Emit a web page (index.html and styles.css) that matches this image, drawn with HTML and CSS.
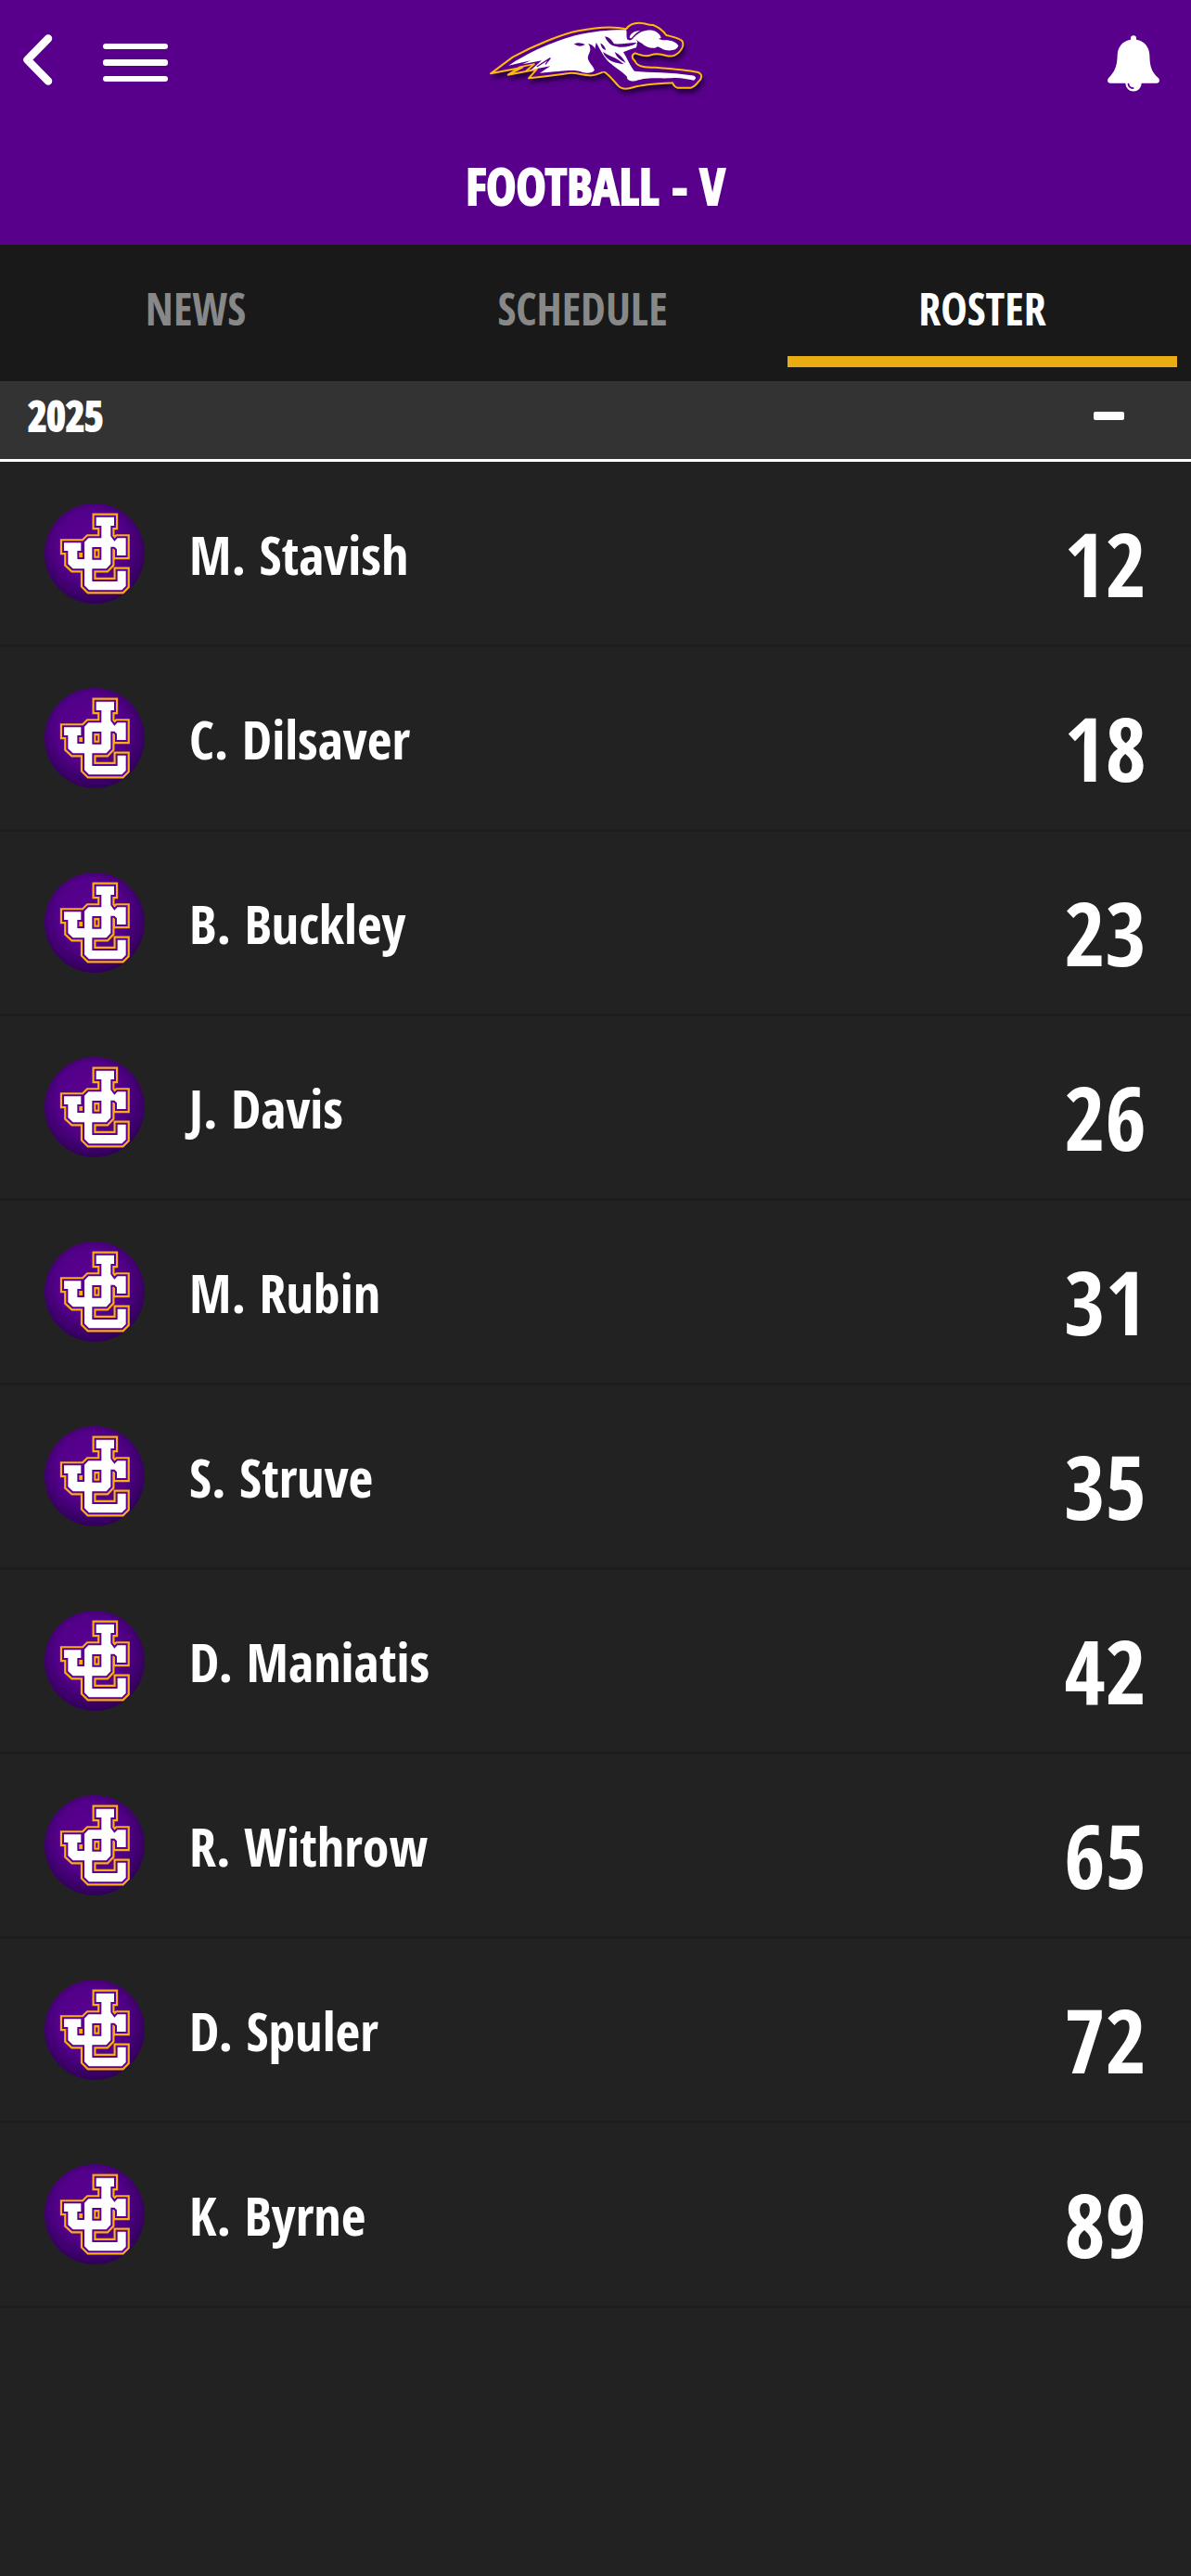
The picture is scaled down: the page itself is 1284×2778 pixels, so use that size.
FILE: index.html
```
<!DOCTYPE html>
<html lang="en">
<head>
<meta charset="utf-8">
<meta name="viewport" content="width=device-width, initial-scale=1">
<title>Football - V | Roster</title>
<link rel="stylesheet" href="styles.css">
</head>
<body>
<svg class="defs" aria-hidden="true">
  <defs>
    <radialGradient id="disc" cx="0.47" cy="0.42" r="0.58">
      <stop offset="0" stop-color="#5c0093"/>
      <stop offset="0.6" stop-color="#53008a"/>
      <stop offset="1" stop-color="#300058"/>
    </radialGradient>
    <symbol id="crest" viewBox="54 66 324 324">
      <circle cx="216" cy="228" r="162" fill="url(#disc)"/>
      <g fill-rule="evenodd">
        <path fill="#f9ae13" stroke="#f9ae13" stroke-width="25" d="M221 110H279V138H268V172L280 188L290 178H317V234H288V214L280 206H268V262L254 277H208V318H290V284H317V333L304 346H198L183 331V277H146L130 262V219H117V193H172V219H160V246H183V191L196 178H238V138H221Z"/>
        <path fill="#fff" stroke="#5c0093" stroke-width="12" paint-order="stroke" d="M221 110H279V138H268V172L280 188L290 178H317V234H288V214L280 206H268V262L254 277H208V318H290V284H317V333L304 346H198L183 331V277H146L130 262V219H117V193H172V219H160V246H183V191L196 178H238V138H221ZM208 207H238V248H208Z"/>
        <path fill="#5c0093" d="M220 220H226V236H220Z"/>
      </g>
    </symbol>
  </defs>
</svg>

<header class="masthead">
  <div class="topbar">
    <div class="topbar-left">
      <button class="icon-button" type="button" aria-label="Back">
        <svg width="34" height="62" viewBox="24 34 34 62"><path d="M52 38.500L29.500 61.500L52 84.500" fill="none" stroke="#fff" stroke-width="8.500" stroke-linecap="round" stroke-linejoin="round"/></svg>
      </button>
      <button class="icon-button" type="button" aria-label="Menu">
        <svg width="72" height="42" viewBox="0 0 72 42" fill="#fff"><rect x="1" y="0" width="70" height="6" rx="3"/><rect x="1" y="17" width="70" height="7" rx="3"/><rect x="1" y="35" width="70" height="6" rx="3"/></svg>
      </button>
    </div>
    <a class="brand" href="#" aria-label="Home">
      <svg width="260" height="100" viewBox="0 24 780 300">
        <path class="brand-outline" d="M57 208L128 155C200 115 290 80 340 70C400 58 460 56 495 64C505 50 525 43 545 45C560 46 566 52 582 51C602 58 615 70 625 84C645 89 665 92 676 102C683 115 676 130 665 140C655 150 640 154 625 150C610 145 590 142 575 148C560 155 540 148 524 142C512 148 512 156 524 168C530 187 560 188 590 188C640 192 690 196 725 203C742 208 742 222 730 233C725 240 717 250 705 254L662 254C650 252 648 243 645 238C600 240 550 242 520 252C500 259 480 259 470 248C455 232 440 212 424 202C410 206 395 216 375 214C350 212 330 204 310 207C270 212 220 220 180 223L206 194L113 212L160 188Z"/>
        <path fill="#fff" d="M115 182C170 146 240 110 330 85C390 70 450 66 495 67C499 78 494 89 500 99L522 89L532 105L528 120L486 139C500 160 506 182 522 200C570 206 640 202 706 214C722 216 724 224 714 230C690 226 670 220 640 223C590 224 560 220 526 232C508 234 496 228 498 218C480 200 462 190 448 178C424 160 412 130 398 108C388 150 396 176 392 198C386 206 370 208 354 204C330 192 290 200 216 206L250 184L188 196L222 166L160 178L186 166Z"/>
        <path fill="#fff" d="M520 92C536 72 560 66 580 68C596 72 606 82 608 92L600 96L614 100C634 98 658 104 664 118C660 132 640 136 622 132C610 130 604 120 594 122C584 130 560 124 546 110C534 104 528 98 520 92Z"/>
        <path fill="#58008c" d="M372 112C392 114 400 134 404 156C412 176 424 190 434 198C424 204 404 202 392 194C384 176 364 164 374 146C382 134 380 120 372 112ZM326 112C340 106 350 108 362 114C350 122 338 120 326 112ZM426 88C442 90 450 102 456 112C480 114 504 108 530 108C516 120 494 124 472 122C454 120 438 116 426 88ZM412 110C424 114 428 126 430 132C420 130 414 122 412 110ZM420 138C440 152 462 154 488 178C462 174 430 168 420 138ZM416 158C430 170 434 180 430 190C420 182 416 172 416 158ZM458 138C474 146 486 158 494 174C476 164 464 156 458 138ZM500 94C500 76 518 66 548 66C530 74 524 86 516 96C510 102 502 102 500 94Z"/>
        <path fill="#fff" d="M506 92C508 78 522 70 540 70C526 76 518 88 512 94ZM468 134C486 126 504 118 530 114L528 124C512 128 494 136 482 138Z"/>
        <path fill="none" stroke="#58008c" stroke-width="4" d="M206 186L250 158L234 178"/>
        <path fill="none" stroke="#fdbb0c" stroke-width="5" stroke-linejoin="round" d="M113 212L150 187L198 177L170 201"/>
      </svg>
    </a>
    <button class="icon-button bell" type="button" aria-label="Notifications">
      <svg width="56" height="61" viewBox="129 82 168 182">
        <circle cx="213" cy="237" r="26" fill="#fff"/>
        <path fill="#fff" d="M204 96V91A9 9 0 0 1 222 91V96C248 100 264 120 265 146C266 180 270 200 294 220C300 228 296 237 287 237H139C130 237 126 228 132 220C154 198 160 180 161 146C162 120 178 100 204 96Z"/>
        <path fill="none" stroke="#58008c" stroke-width="5" d="M196 237C197 247 204 253 214 253"/>
      </svg>
    </button>
  </div>
  <h1 class="title">FOOTBALL - V</h1>
</header>

<nav class="tabs" aria-label="Team sections">
  <a class="tab" href="#news">NEWS</a>
  <a class="tab" href="#schedule">SCHEDULE</a>
  <a class="tab tab-active" href="#roster" aria-current="page">ROSTER</a>
</nav>

<main>
  <h2 class="season">
    <button class="season-toggle" type="button" aria-expanded="true" aria-controls="players">
      <span>2025</span>
      <span class="minus"></span>
    </button>
  </h2>
  <ul class="players" id="players">
    <li class="player"><svg class="crest"><use href="#crest"/></svg><span class="name">M. Stavish</span><span class="number">12</span></li>
    <li class="player"><svg class="crest"><use href="#crest"/></svg><span class="name">C. Dilsaver</span><span class="number">18</span></li>
    <li class="player"><svg class="crest"><use href="#crest"/></svg><span class="name">B. Buckley</span><span class="number">23</span></li>
    <li class="player"><svg class="crest"><use href="#crest"/></svg><span class="name">J. Davis</span><span class="number">26</span></li>
    <li class="player"><svg class="crest"><use href="#crest"/></svg><span class="name">M. Rubin</span><span class="number">31</span></li>
    <li class="player"><svg class="crest"><use href="#crest"/></svg><span class="name">S. Struve</span><span class="number">35</span></li>
    <li class="player"><svg class="crest"><use href="#crest"/></svg><span class="name">D. Maniatis</span><span class="number">42</span></li>
    <li class="player"><svg class="crest"><use href="#crest"/></svg><span class="name">R. Withrow</span><span class="number">65</span></li>
    <li class="player"><svg class="crest"><use href="#crest"/></svg><span class="name">D. Spuler</span><span class="number">72</span></li>
    <li class="player"><svg class="crest"><use href="#crest"/></svg><span class="name">K. Byrne</span><span class="number">89</span></li>
  </ul>
</main>
</body>
</html>
```
FILE: styles.css
```
* {
  box-sizing: border-box;
}

body {
  margin: 0;
  min-height: 100vh;
  background: #222;
  color: #fff;
  font-family: "Open Sans Condensed", "Open Sans", sans-serif;
  font-weight: 700;
}

.defs {
  display: block;
  width: 0;
  height: 0;
}

svg {
  display: block;
}

button {
  padding: 0;
  border: 0;
  background: none;
  color: inherit;
  font: inherit;
  cursor: pointer;
}

.masthead {
  background: #58008c;
}

.topbar {
  display: grid;
  grid-template-columns: 1fr auto 1fr;
  align-items: center;
  height: 136px;
  padding: 0 34px 0 24px;
}

.topbar-left {
  display: flex;
  align-items: center;
  gap: 52px;
}

.brand {
  margin-left: 6px;
}

.bell {
  justify-self: end;
}

.brand-outline {
  fill: #58008c;
  stroke: #fdbb0c;
  stroke-width: 6;
  stroke-linejoin: round;
  filter: drop-shadow(6px 14px 6px rgba(20, 0, 40, 0.7));
}

.title {
  margin: 0;
  padding: 12px 0;
  font-size: 54px;
  font-weight: 800;
  line-height: 104px;
  text-align: center;
  -webkit-text-stroke: 2px #fff;
}

.tabs {
  display: grid;
  grid-template-columns: 422fr 412fr 450fr;
  padding-bottom: 15px;
  background: #191919;
}

.tab {
  margin: 0 15px;
  padding: 18px 0 0;
  border-bottom: 12px solid transparent;
  color: #888;
  font-size: 48px;
  line-height: 102px;
  text-align: center;
  text-decoration: none;
}

.tab-active {
  border-color: #eaac13;
  color: #fff;
}

.season {
  margin: 0;
  border-bottom: 3px solid #fff;
  background: #333;
  font-size: 44px;
  font-weight: 800;
}

.season-toggle {
  display: flex;
  align-items: center;
  justify-content: space-between;
  width: 100%;
  height: 84px;
  padding: 0 72px 10px 30px;
  -webkit-text-stroke: 2px #fff;
}

.minus {
  width: 33px;
  height: 9px;
  border-radius: 2px;
  background: #fff;
}

.players {
  margin: 0;
  padding: 1px 0 0;
  list-style: none;
}

.player {
  display: flex;
  align-items: center;
  height: 199px;
  padding: 0 48px;
  border-bottom: 3px solid #1d1d1d;
}

.crest {
  flex: none;
  width: 108px;
  height: 108px;
}

.name {
  flex: 1;
  padding-left: 48px;
  font-size: 58px;
}

.number {
  padding-top: 20px;
  font-size: 96px;
  line-height: 1;
}
```
